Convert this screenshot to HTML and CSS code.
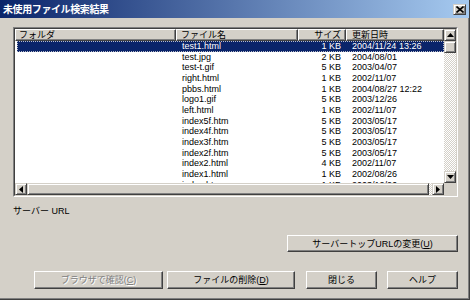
FILE: index.html
```html
<!DOCTYPE html>
<html lang="ja">
<head>
<meta charset="UTF-8">
<title>未使用ファイル検索結果</title>
<link rel="stylesheet" href="styles.css">
</head>
<body>

<div class="window">
    <div class="titlebar">
        <span class="title">未使用ファイル検索結果</span>
        <div class="close raised">
            <svg width="8" height="7" viewBox="0 0 8 7"><path d="M0.5 0.5 L7.5 6.5 M7.5 0.5 L0.5 6.5" stroke="#000" stroke-width="1.6" fill="none"/></svg>
        </div>
    </div>

    <div class="content">
        <div class="listbox">
            <div class="list-inner">
                <div class="list-main">
                    <div class="header">
                        <div class="hcell">フォルダ</div>
                        <div class="hcell name">ファイル名</div>
                        <div class="hcell size">サイズ</div>
                        <div class="hcell date">更新日時</div>
                    </div>
                    <div class="row selected"><span></span><span class="name">test1.html</span><span class="size">1 KB</span><span class="date">2004/11/24 13:26</span></div>
                    <div class="row"><span></span><span class="name">test.jpg</span><span class="size">2 KB</span><span class="date">2004/08/01</span></div>
                    <div class="row"><span></span><span class="name">test-t.gif</span><span class="size">5 KB</span><span class="date">2003/04/07</span></div>
                    <div class="row"><span></span><span class="name">right.html</span><span class="size">1 KB</span><span class="date">2002/11/07</span></div>
                    <div class="row"><span></span><span class="name">pbbs.html</span><span class="size">1 KB</span><span class="date">2004/08/27 12:22</span></div>
                    <div class="row"><span></span><span class="name">logo1.gif</span><span class="size">5 KB</span><span class="date">2003/12/26</span></div>
                    <div class="row"><span></span><span class="name">left.html</span><span class="size">1 KB</span><span class="date">2002/11/07</span></div>
                    <div class="row"><span></span><span class="name">index5f.htm</span><span class="size">5 KB</span><span class="date">2003/05/17</span></div>
                    <div class="row"><span></span><span class="name">index4f.htm</span><span class="size">5 KB</span><span class="date">2003/05/17</span></div>
                    <div class="row"><span></span><span class="name">index3f.htm</span><span class="size">5 KB</span><span class="date">2003/05/17</span></div>
                    <div class="row"><span></span><span class="name">index2f.htm</span><span class="size">5 KB</span><span class="date">2003/05/17</span></div>
                    <div class="row"><span></span><span class="name">index2.html</span><span class="size">4 KB</span><span class="date">2002/11/07</span></div>
                    <div class="row"><span></span><span class="name">index1.html</span><span class="size">1 KB</span><span class="date">2002/08/26</span></div>
                    <div class="row"><span></span><span class="name">index.htm</span><span class="size">1 KB</span><span class="date">2003/12/26</span></div>
                </div>

                <div class="vscroll">
                    <div class="sbtn raised"><svg width="7" height="4" viewBox="0 0 7 4"><polygon points="3.5,0 7,4 0,4" fill="#000"/></svg></div>
                    <div class="thumb raised"></div>
                    <div class="track"></div>
                    <div class="sbtn raised"><svg width="7" height="4" viewBox="0 0 7 4"><polygon points="0,0 7,0 3.5,4" fill="#000"/></svg></div>
                </div>

                <div class="hscroll">
                    <div class="sbtn raised"><svg width="4" height="7" viewBox="0 0 4 7"><polygon points="4,0 4,7 0,3.5" fill="#000"/></svg></div>
                    <div class="hthumb raised"></div>
                    <div class="track"></div>
                    <div class="sbtn raised"><svg width="4" height="7" viewBox="0 0 4 7"><polygon points="0,0 4,3.5 0,7" fill="#000"/></svg></div>
                </div>

                <div class="corner"></div>
            </div>
        </div>

        <div class="url-label">サーバー URL</div>

        <div class="url-row">
            <button class="btn wide">サーバートップURLの変更(<u>U</u>)</button>
        </div>

        <div class="btn-row">
            <button class="btn browse disabled">ブラウザで確認(<u>C</u>)</button>
            <button class="btn delete">ファイルの削除(<u>D</u>)</button>
            <button class="btn small close-btn">閉じる</button>
            <button class="btn small">ヘルプ</button>
        </div>
    </div>
</div>

</body>
</html>
```

FILE: styles.css
```css
body {
    margin: 0;
    font-family: "Liberation Sans", "Noto Sans CJK JP", sans-serif;
    font-size: 9px;
    color: #000;
}
.window {
    width: 470px;
    height: 300px;
    box-sizing: border-box;
    background-color: #d4d0c8;
    border-right: 1px solid #404040;
    border-bottom: 1px solid #404040;
    box-shadow: inset -1px -1px #808080;
    overflow: hidden;
}
.titlebar {
    height: 18px;
    display: flex;
    align-items: center;
    justify-content: space-between;
    padding: 0 3px 0 3px;
    background: linear-gradient(to right, #0a246a, #a6caf0);
    color: #fff;
}
.title {
    font-family: "Noto Sans CJK JP", sans-serif;
    font-weight: bold;
    font-size: 10px;
    line-height: 12px;
    letter-spacing: -0.4px;
}
.raised {
    box-sizing: border-box;
    background-color: #d4d0c8;
    border: 1px solid;
    border-color: #d4d0c8 #404040 #404040 #d4d0c8;
    box-shadow: inset 1px 1px #fff, inset -1px -1px #808080;
    display: flex;
    align-items: center;
    justify-content: center;
}
.close {
    width: 13px;
    height: 11px;
}
.content {
    padding: 9px 11px 0 13px;
}
.listbox {
    height: 170px;
    box-sizing: border-box;
    border: 1px solid;
    border-color: #808080 #fff #fff #808080;
}
.list-inner {
    height: 100%;
    box-sizing: border-box;
    border: 1px solid;
    border-color: #404040 #d4d0c8 #d4d0c8 #404040;
    display: grid;
    grid-template-columns: 1fr 12px;
    grid-template-rows: 1fr 12px;
}
.list-main {
    background-color: #fff;
    overflow: hidden;
}
.header, .row {
    display: grid;
    grid-template-columns: 161px 122px 48px 1fr;
    white-space: nowrap;
}
.header {
    height: 12px;
}
.hcell {
    box-sizing: border-box;
    background-color: #d4d0c8;
    border: 1px solid;
    border-color: #fff #404040 #404040 #fff;
    box-shadow: inset -1px -1px #808080;
    line-height: 10px;
    padding-left: 3px;
    overflow: hidden;
}
.hcell.name {
    padding-left: 4px;
}
.hcell.size {
    text-align: right;
    padding-right: 4px;
}
.hcell.date {
    padding-left: 5px;
}
.row {
    height: 10.67px;
    line-height: 10.67px;
}
.row .name {
    padding-left: 6px;
}
.row .size {
    text-align: right;
    padding-right: 5px;
}
.row .date {
    padding-left: 6px;
}
.row.selected {
    margin-left: 2px;
    grid-template-columns: 159px 122px 48px 1fr;
    background-color: #0a246a;
    color: #fff;
    outline: 1px dotted #b8bcc8;
    outline-offset: -1px;
}
.vscroll, .hscroll {
    display: flex;
    background-color: #ece9e4;
    background-image: conic-gradient(#fff 25%, #d4d0c8 0 50%, #fff 0 75%, #d4d0c8 0);
    background-size: 2px 2px;
}
.vscroll {
    flex-direction: column;
}
.sbtn, .thumb {
    width: 12px;
    height: 12px;
    flex: none;
}
.track {
    flex: 1;
}
.hthumb {
    flex: 1;
}
.hscroll .track {
    flex: none;
    width: 3px;
}
.corner {
    background-color: #d4d0c8;
}
.url-label {
    margin-top: 8px;
    line-height: 12px;
}
.url-row, .btn-row {
    display: flex;
    justify-content: flex-end;
}
.url-row {
    margin-top: 18px;
}
.btn-row {
    margin-top: 19px;
}
.btn {
    box-sizing: border-box;
    height: 18px;
    margin: 0;
    padding: 0;
    font-family: inherit;
    font-size: 9px;
    line-height: 14px;
    color: #000;
    background-color: #d4d0c8;
    border: 1px solid;
    border-color: #fff #404040 #404040 #fff;
    box-shadow: inset -1px -1px #808080;
    white-space: nowrap;
}
.btn.wide {
    width: 171px;
    height: 17px;
}
.btn.browse {
    width: 129px;
}
.btn.delete {
    width: 128px;
    margin-left: 4px;
}
.btn.small {
    width: 71px;
    margin-left: 10px;
}
.btn.close-btn {
    margin-left: 11px;
}
.btn.disabled {
    color: #808080;
    text-shadow: 1px 1px #fff;
}
```
